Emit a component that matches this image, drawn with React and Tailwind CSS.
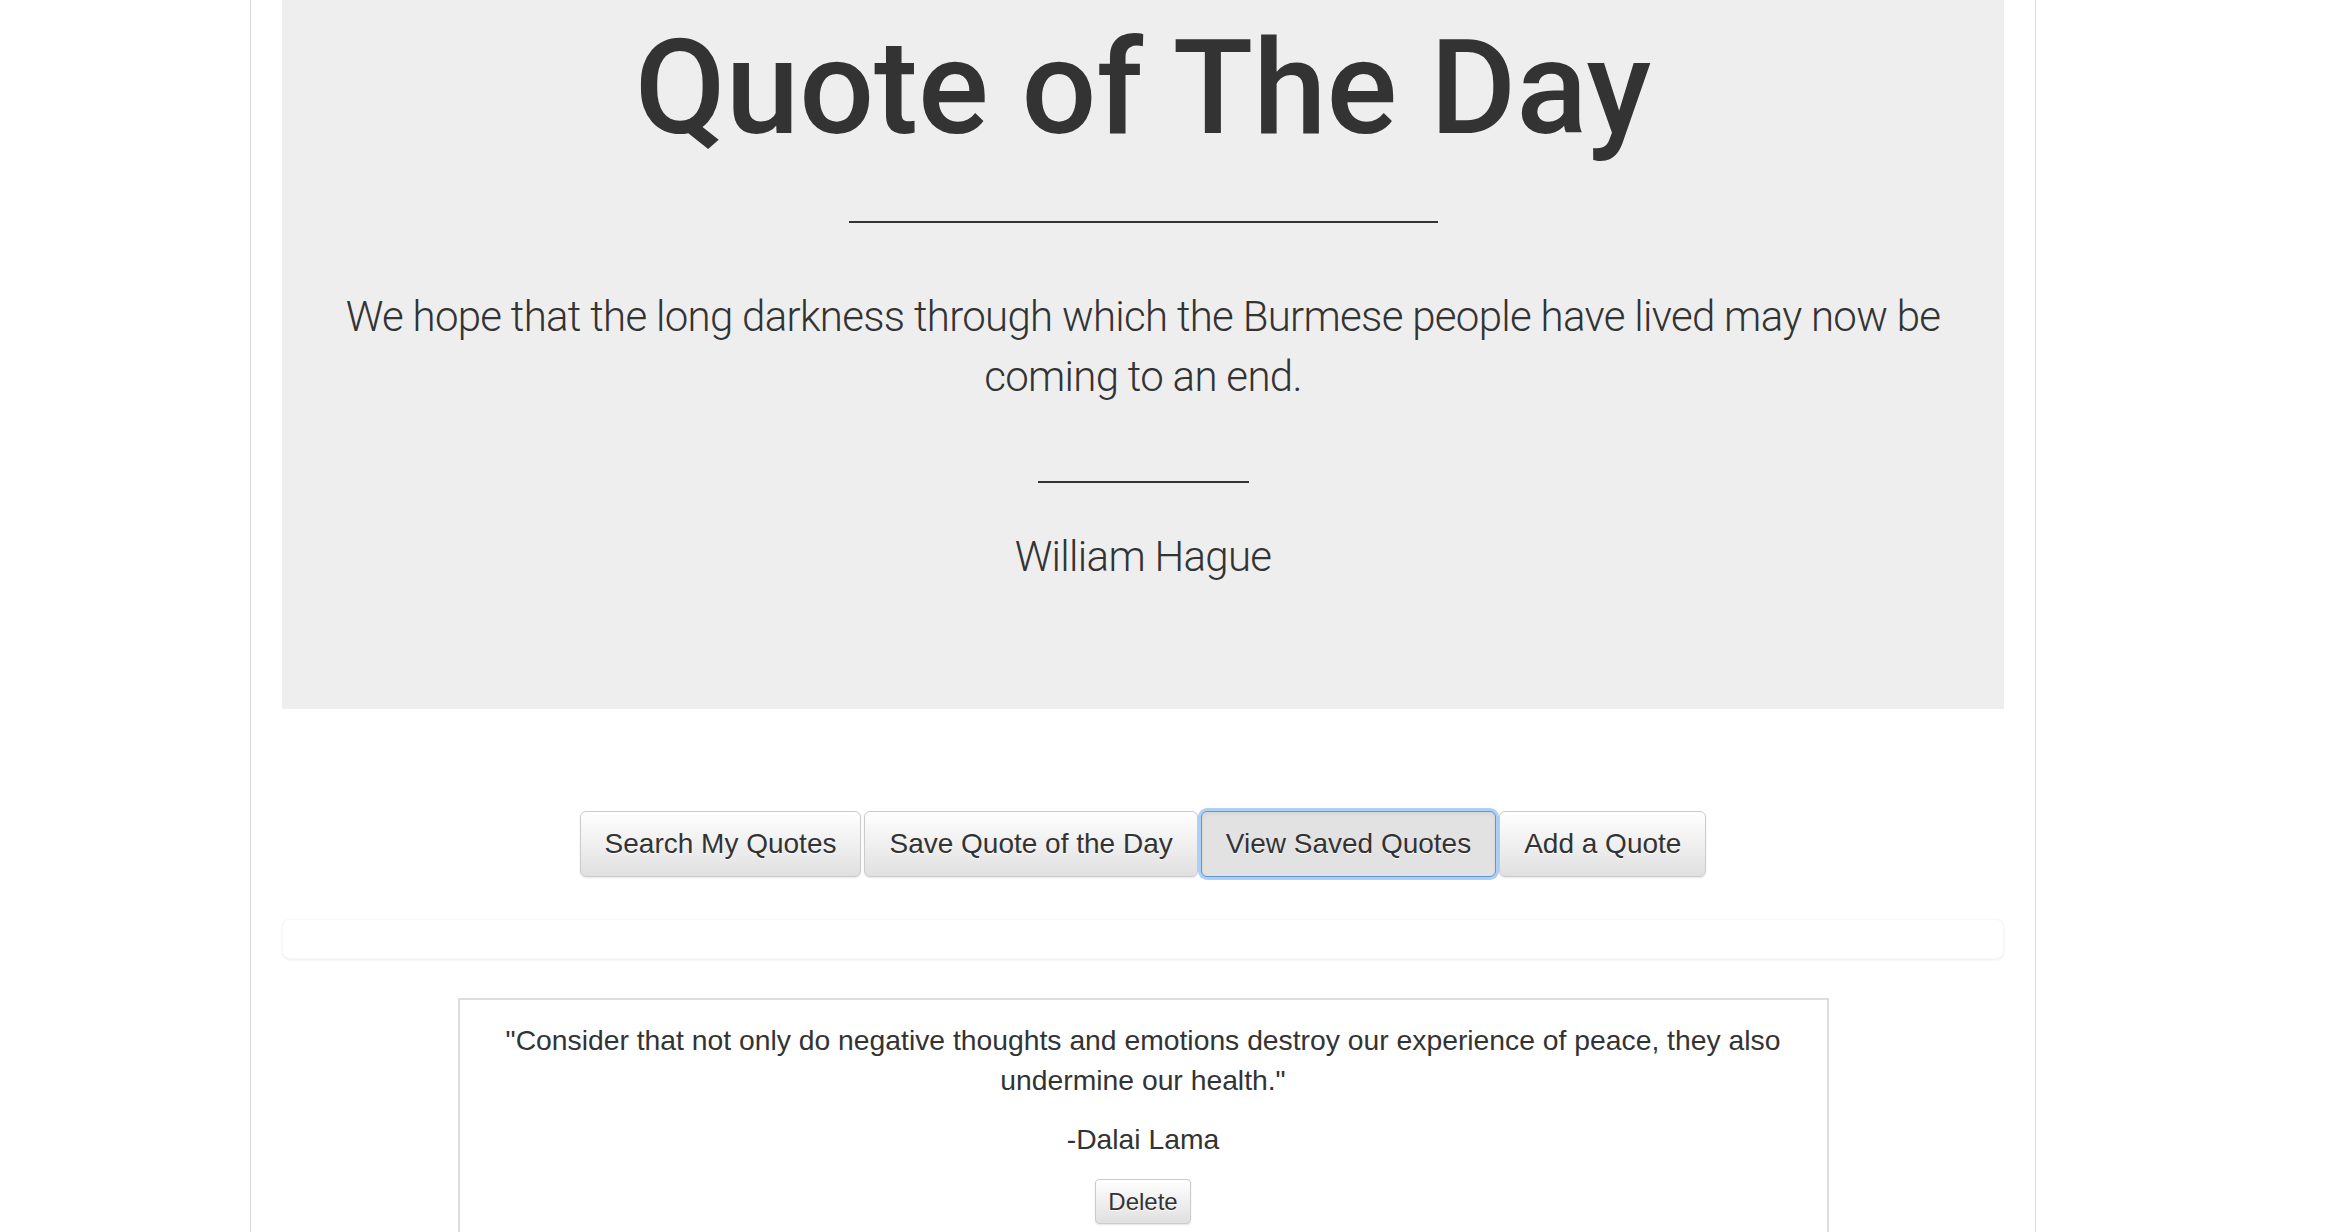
import React from "react";

const buttons = [
  { label: "Search My Quotes" },
  { label: "Save Quote of the Day" },
  { label: "View Saved Quotes", focused: true },
  { label: "Add a Quote" },
];

function NavButton({ label, focused }) {
  // bootstrap-theme style default button
  const base =
    "h-[66px] px-[24px] text-[28px] leading-[40px] rounded-[6px] border text-[#333] [text-shadow:0_1px_0_#fff]";
  const look = focused
    ? "border-[#5f97d6] bg-[#e2e2e2] shadow-[0_0_0_3px_rgba(120,175,240,0.6),inset_0_2px_4px_rgba(0,0,0,0.06)]"
    : "border-[#cbcbcb] bg-linear-to-b from-white to-[#e0e0e0] shadow-[0_1px_2px_rgba(0,0,0,0.1)]";
  return (
    <button type="button" className={`${base} ${look}`}>
      {label}
    </button>
  );
}

export default function App() {
  return (
    <div className="min-h-screen bg-white text-[#333] font-['Liberation_Sans',Arial,sans-serif]">
      <div className="ml-[250px] w-[1786px] min-h-[1232px] border-x border-[#d9d9d9] px-[31px]">
        {/* Jumbotron */}
        <div className="h-[709px] bg-[#eee] flex flex-col items-center">
          <h1 className="mt-[22px] text-[132px] leading-none font-medium font-['Roboto','Liberation_Sans',sans-serif]">
            Quote of The Day
          </h1>
          <div className="mt-[67px] h-[2px] w-[589px] bg-[#333]" />
          <p className="mt-[64px] w-[1640px] text-center text-[42px] leading-[60px] font-light tracking-[-0.7px] font-['Roboto','Liberation_Sans',sans-serif]">
            We hope that the long darkness through which the Burmese people have lived may now be coming to an end.
          </p>
          <div className="mt-[74px] h-[2px] w-[211px] bg-[#333]" />
          <p className="mt-[44px] text-[42px] leading-[60px] font-light tracking-[-0.7px] font-['Roboto','Liberation_Sans',sans-serif]">
            William Hague
          </p>
        </div>

        {/* Button group */}
        <div className="mt-[102px] flex justify-center gap-[3px]">
          {buttons.map((b) => (
            <NavButton key={b.label} label={b.label} focused={b.focused} />
          ))}
        </div>

        {/* Empty panel */}
        <div className="mt-[42px] h-[40px] rounded-[8px] border border-[#f8f8f8] bg-white shadow-[0_1px_3px_rgba(0,0,0,0.07)]" />

        {/* Saved quote card */}
        <div className="mt-[39px] mx-auto w-[1371px] border-2 border-[#ddd] px-[30px] pt-[20px] pb-[30px] text-center">
          <p className="text-[28.3px] leading-[40px]">
            "Consider that not only do negative thoughts and emotions destroy our experience of peace, they also undermine our health."
          </p>
          <p className="mt-[19px] text-[28.3px] leading-[40px]">-Dalai Lama</p>
          <button
            type="button"
            className="mt-[20px] h-[45px] px-[12px] text-[24px] leading-[35px] rounded-[4px] border border-[#cbcbcb] bg-linear-to-b from-white to-[#e0e0e0] shadow-[0_1px_2px_rgba(0,0,0,0.1)] [text-shadow:0_1px_0_#fff]"
          >
            Delete
          </button>
        </div>
      </div>
    </div>
  );
}
